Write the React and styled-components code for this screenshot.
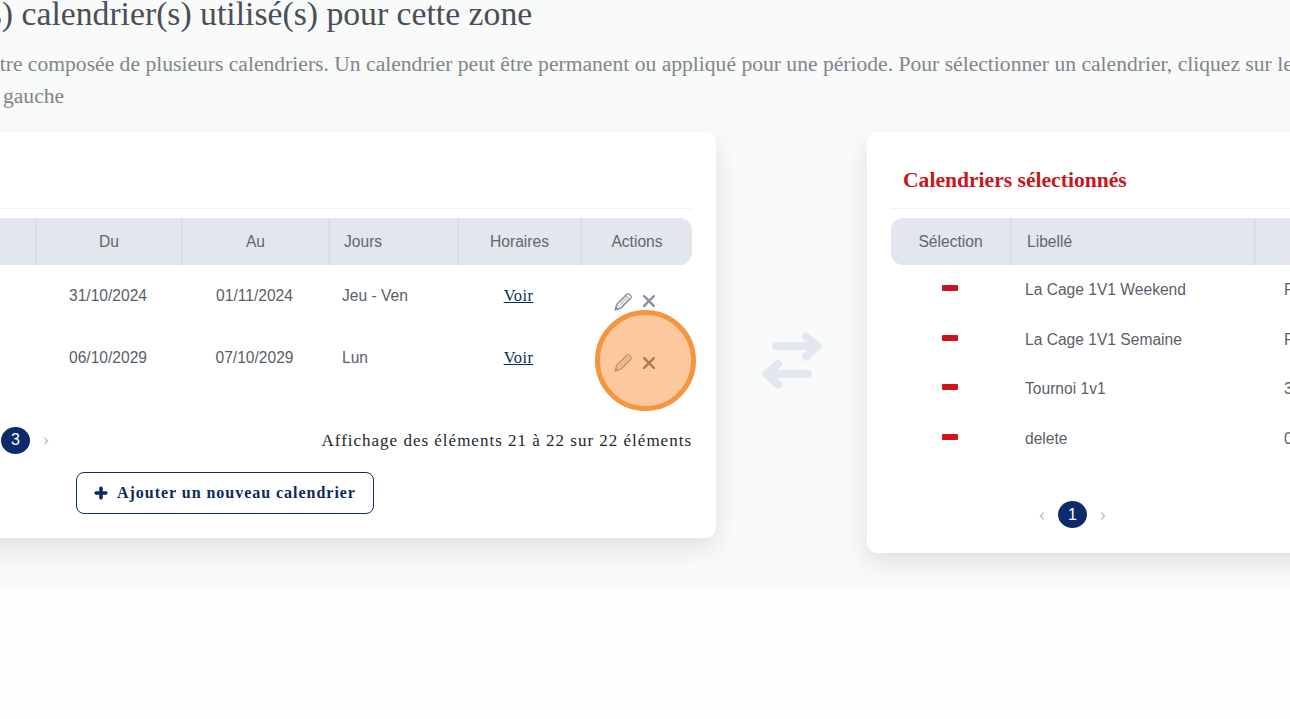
import React from "react";
import styled, { createGlobalStyle } from "styled-components";
import { FaPlus } from "react-icons/fa";

const Global = createGlobalStyle`
  html, body { margin: 0; padding: 0; background: #fefefe; overflow: hidden; }
  body { font-family: "Liberation Sans", Arial, sans-serif; }
`;

const Section = styled.section`
  height: 588px;
  width: 1290px;
  overflow: hidden;
  background: #f9fafa;
`;
const Heading = styled.h2`
  margin: -6px 0 0 -58px;
  font: 400 33.7px/40px "Liberation Serif", serif;
  color: #4a4f57;
  white-space: nowrap;
`;
const Description = styled.div`
  margin-top: 14px;
  font: 400 21.6px/32px "Liberation Serif", serif;
  color: #81858c;
  white-space: nowrap;
`;
const DescLine = styled.div`
  margin-left: ${(p) => p.$offset}px;
`;
const CardsRow = styled.div`
  display: flex;
  align-items: flex-start;
  margin: 20px 0 0 -100px;
`;
const Card = styled.div`
  position: relative;
  flex: none;
  box-sizing: border-box;
  width: ${(p) => p.$width}px;
  padding: 0 24px 24px;
  background: #fff;
  border-radius: 10px;
  box-shadow: 0 10px 24px rgba(30, 40, 60, 0.12);
`;
const CardTitle = styled.div`
  box-sizing: border-box;
  height: 77px;
  padding: 34px 12px 0;
  border-bottom: 1px solid #f2f3f5;
  margin-bottom: 9px;
  font: 700 21.6px/28px "Liberation Serif", serif;
  color: #c8161c;
`;
const SwapColumn = styled.div`
  flex: none;
  width: 151px;
  margin-top: 200px;
  display: flex;
  justify-content: center;
  color: #e3e7ef;
  line-height: 0;
`;
const SwapSvg = styled.svg`
  width: 60px;
  height: 57px;
`;
const Grid = styled.div`
  display: grid;
  grid-template-columns: ${(p) => p.$cols};
  align-items: center;
  height: ${(p) => p.$height}px;
`;
const HeadRow = styled(Grid)`
  background: #e2e6ed;
  border-radius: 12px;
  height: 47px;
  align-items: stretch;
`;
const HeadCell = styled.div`
  display: flex;
  align-items: center;
  justify-content: ${(p) => (p.$pad ? "flex-start" : "center")};
  padding-left: ${(p) => p.$pad || 0}px;
  font-size: 15.6px;
  color: #62676f;
  border-left: ${(p) => (p.$first ? "0" : "2px solid #d9dee6")};
`;
const Cell = styled.div`
  font-size: 15.6px;
  line-height: 20px;
  color: #5a5f67;
  text-align: ${(p) => (p.$left ? "left" : "center")};
  padding-left: ${(p) => p.$pad || 0}px;
  white-space: nowrap;
  overflow: hidden;
`;
const VoirLink = styled.a`
  font: 400 16.5px/20px "Liberation Serif", serif;
  letter-spacing: 0.4px;
  color: #0d2a5f;
  text-decoration: underline;
`;
const ActionsCell = styled.div`
  display: flex;
  align-items: center;
  padding: 10px 0 0 34px;
  gap: 10px;
`;
const PencilSvg = styled.svg`
  width: 19px;
  height: 19px;
  flex: none;
  color: #8d929a;
`;
const CrossSvg = styled.svg`
  width: 12px;
  height: 12px;
  flex: none;
  color: ${(p) => (p.$dark ? "#5b5f66" : "#8b919b")};
`;
const Footer = styled.div`
  display: flex;
  align-items: center;
  justify-content: space-between;
  height: 26px;
  margin-top: 40px;
`;
const Pager = styled.div`
  display: flex;
  align-items: center;
  gap: 3px;
  margin-left: ${(p) => p.$offset}px;
  margin-bottom: ${(p) => p.$lift || 0}px;
`;
const Chevron = styled.span`
  width: 26px;
  text-align: center;
  font: 400 22px/20px "Liberation Serif", serif;
  color: #bdbfc3;
  margin-bottom: 2px;
`;
const PageDot = styled.span`
  width: 29px;
  height: 27px;
  display: flex;
  align-items: center;
  justify-content: center;
  border-radius: 50%;
  font-size: 16px;
  color: ${(p) => (p.$active ? "#fff" : "#5a5f67")};
  background: ${(p) => (p.$active ? "#0d2a6b" : "transparent")};
`;
const Info = styled.div`
  font: 400 17px/20px "Liberation Serif", serif;
  letter-spacing: 1px;
  color: #24272b;
  white-space: nowrap;
`;
const AddButton = styled.button`
  display: flex;
  align-items: center;
  gap: 9px;
  box-sizing: border-box;
  width: 298px;
  height: 42px;
  margin: 18px 0 0 152px;
  padding: 0 0 0 17px;
  background: #fff;
  border: 1px solid #12305a;
  border-radius: 8px;
  font: 700 16px/20px "Liberation Serif", serif;
  letter-spacing: 0.97px;
  color: #0d2a5f;
  white-space: nowrap;
`;
const Spot = styled.div`
  position: absolute;
  left: 695px;
  top: 178px;
  box-sizing: border-box;
  width: 101px;
  height: 101px;
  border-radius: 50%;
  border: 5px solid #f4953f;
  background: rgba(251, 146, 60, 0.5);
`;
const Minus = styled.span`
  display: block;
  width: 16px;
  height: 6px;
  margin: 5px 0 9px 51px;
  border-radius: 1px;
  background: #d0121b;
`;
const RightPager = styled.div`
  display: flex;
  justify-content: center;
  margin: 37px 0 1px;
  width: 363px;
`;

const Pencil = () => (
  <PencilSvg viewBox="0 0 24 24" fill="none" stroke="currentColor" strokeWidth="1.6" strokeLinejoin="round">
    <path d="M1.5 22.5l2-7L16.4 2.6a1.8 1.8 0 0 1 2.5 0l2.5 2.5a1.8 1.8 0 0 1 0 2.5L8.5 20.5z" />
    <path d="M6 14.6L15.6 5M7.6 16.4L17.4 6.6M9.4 18.2L19 8.6M14.8 3.8l5.4 5.4M3.5 15.5l5 5" strokeWidth="1.1" />
    <path d="M1.5 22.5l1-3.6 2.6 2.6z" fill="currentColor" />
  </PencilSvg>
);
const Cross = ({ dark }) => (
  <CrossSvg $dark={dark} viewBox="0 0 12 12" fill="none" stroke="currentColor" strokeWidth="2.4" strokeLinecap="round">
    <path d="M1.2 1.2l9.6 9.6M10.8 1.2l-9.6 9.6" />
  </CrossSvg>
);
const SwapIcon = () => (
  <SwapSvg viewBox="0 0 60 57" fill="none" stroke="currentColor" strokeWidth="8" strokeLinecap="round" strokeLinejoin="round">
    <path d="M14 14H55M44 4.5L55.5 14L44 24.5" />
    <path d="M5 42H46M16 32L4.5 42L16 52.5" />
  </SwapSvg>
);

const leftCols = "111px 146px 147px 129px 123px 112px";
const rightCols = "119px 244px 400px";

const leftRows = [
  { du: "31/10/2024", au: "01/11/2024", jours: "Jeu - Ven", height: 62 },
  { du: "06/10/2029", au: "07/10/2029", jours: "Lun", height: 61, dark: true },
];
const rightRows = [
  { label: "La Cage 1V1 Weekend", period: "Permanent", height: 50 },
  { label: "La Cage 1V1 Semaine", period: "Permanent", height: 50 },
  { label: "Tournoi 1v1", period: "31/10/2024", height: 48 },
  { label: "delete", period: "06/10/2029", height: 51 },
];

export default function App() {
  return (
    <>
      <Global />
      <Section>
        <Heading>Le(s) calendrier(s) utilisé(s) pour cette zone</Heading>
        <Description>
          <DescLine $offset={-140}>
            Une zone peut être composée de plusieurs calendriers. Un calendrier peut être permanent ou appliqué pour une période. Pour sélectionner un calendrier, cliquez sur le
          </DescLine>
          <DescLine $offset={-12}>à gauche</DescLine>
        </Description>
        <CardsRow>
          <Card $width={816}>
            <CardTitle />
            <HeadRow $cols={leftCols}>
              <HeadCell $first />
              <HeadCell>Du</HeadCell>
              <HeadCell>Au</HeadCell>
              <HeadCell $pad={14}>Jours</HeadCell>
              <HeadCell>Horaires</HeadCell>
              <HeadCell>Actions</HeadCell>
            </HeadRow>
            {leftRows.map((r) => (
              <Grid key={r.du} $cols={leftCols} $height={r.height}>
                <Cell />
                <Cell>{r.du}</Cell>
                <Cell>{r.au}</Cell>
                <Cell $left $pad={14}>{r.jours}</Cell>
                <Cell><VoirLink>Voir</VoirLink></Cell>
                <ActionsCell>
                  <Pencil />
                  <Cross dark={r.dark} />
                </ActionsCell>
              </Grid>
            ))}
            <Footer>
              <Pager $offset={-16} $lift={2}>
                <Chevron>‹</Chevron>
                <PageDot>1</PageDot>
                <PageDot>2</PageDot>
                <PageDot $active>3</PageDot>
                <Chevron>›</Chevron>
              </Pager>
              <Info>Affichage des éléments 21 à 22 sur 22 éléments</Info>
            </Footer>
            <AddButton>
              <FaPlus size={14} stroke="currentColor" strokeWidth={30} />
              Ajouter un nouveau calendrier
            </AddButton>
            <Spot />
          </Card>
          <SwapColumn>
            <SwapIcon />
          </SwapColumn>
          <Card $width={820}>
            <CardTitle>Calendriers sélectionnés</CardTitle>
            <HeadRow $cols={rightCols}>
              <HeadCell $first>Sélection</HeadCell>
              <HeadCell $pad={15}>Libellé</HeadCell>
              <HeadCell>Période</HeadCell>
            </HeadRow>
            {rightRows.map((r) => (
              <Grid key={r.label} $cols={rightCols} $height={r.height}>
                <Cell><Minus /></Cell>
                <Cell $left $pad={15}>{r.label}</Cell>
                <Cell $left $pad={30}>{r.period}</Cell>
              </Grid>
            ))}
            <RightPager>
              <Pager $offset={0}>
                <Chevron>‹</Chevron>
                <PageDot $active>1</PageDot>
                <Chevron>›</Chevron>
              </Pager>
            </RightPager>
          </Card>
        </CardsRow>
      </Section>
    </>
  );
}
